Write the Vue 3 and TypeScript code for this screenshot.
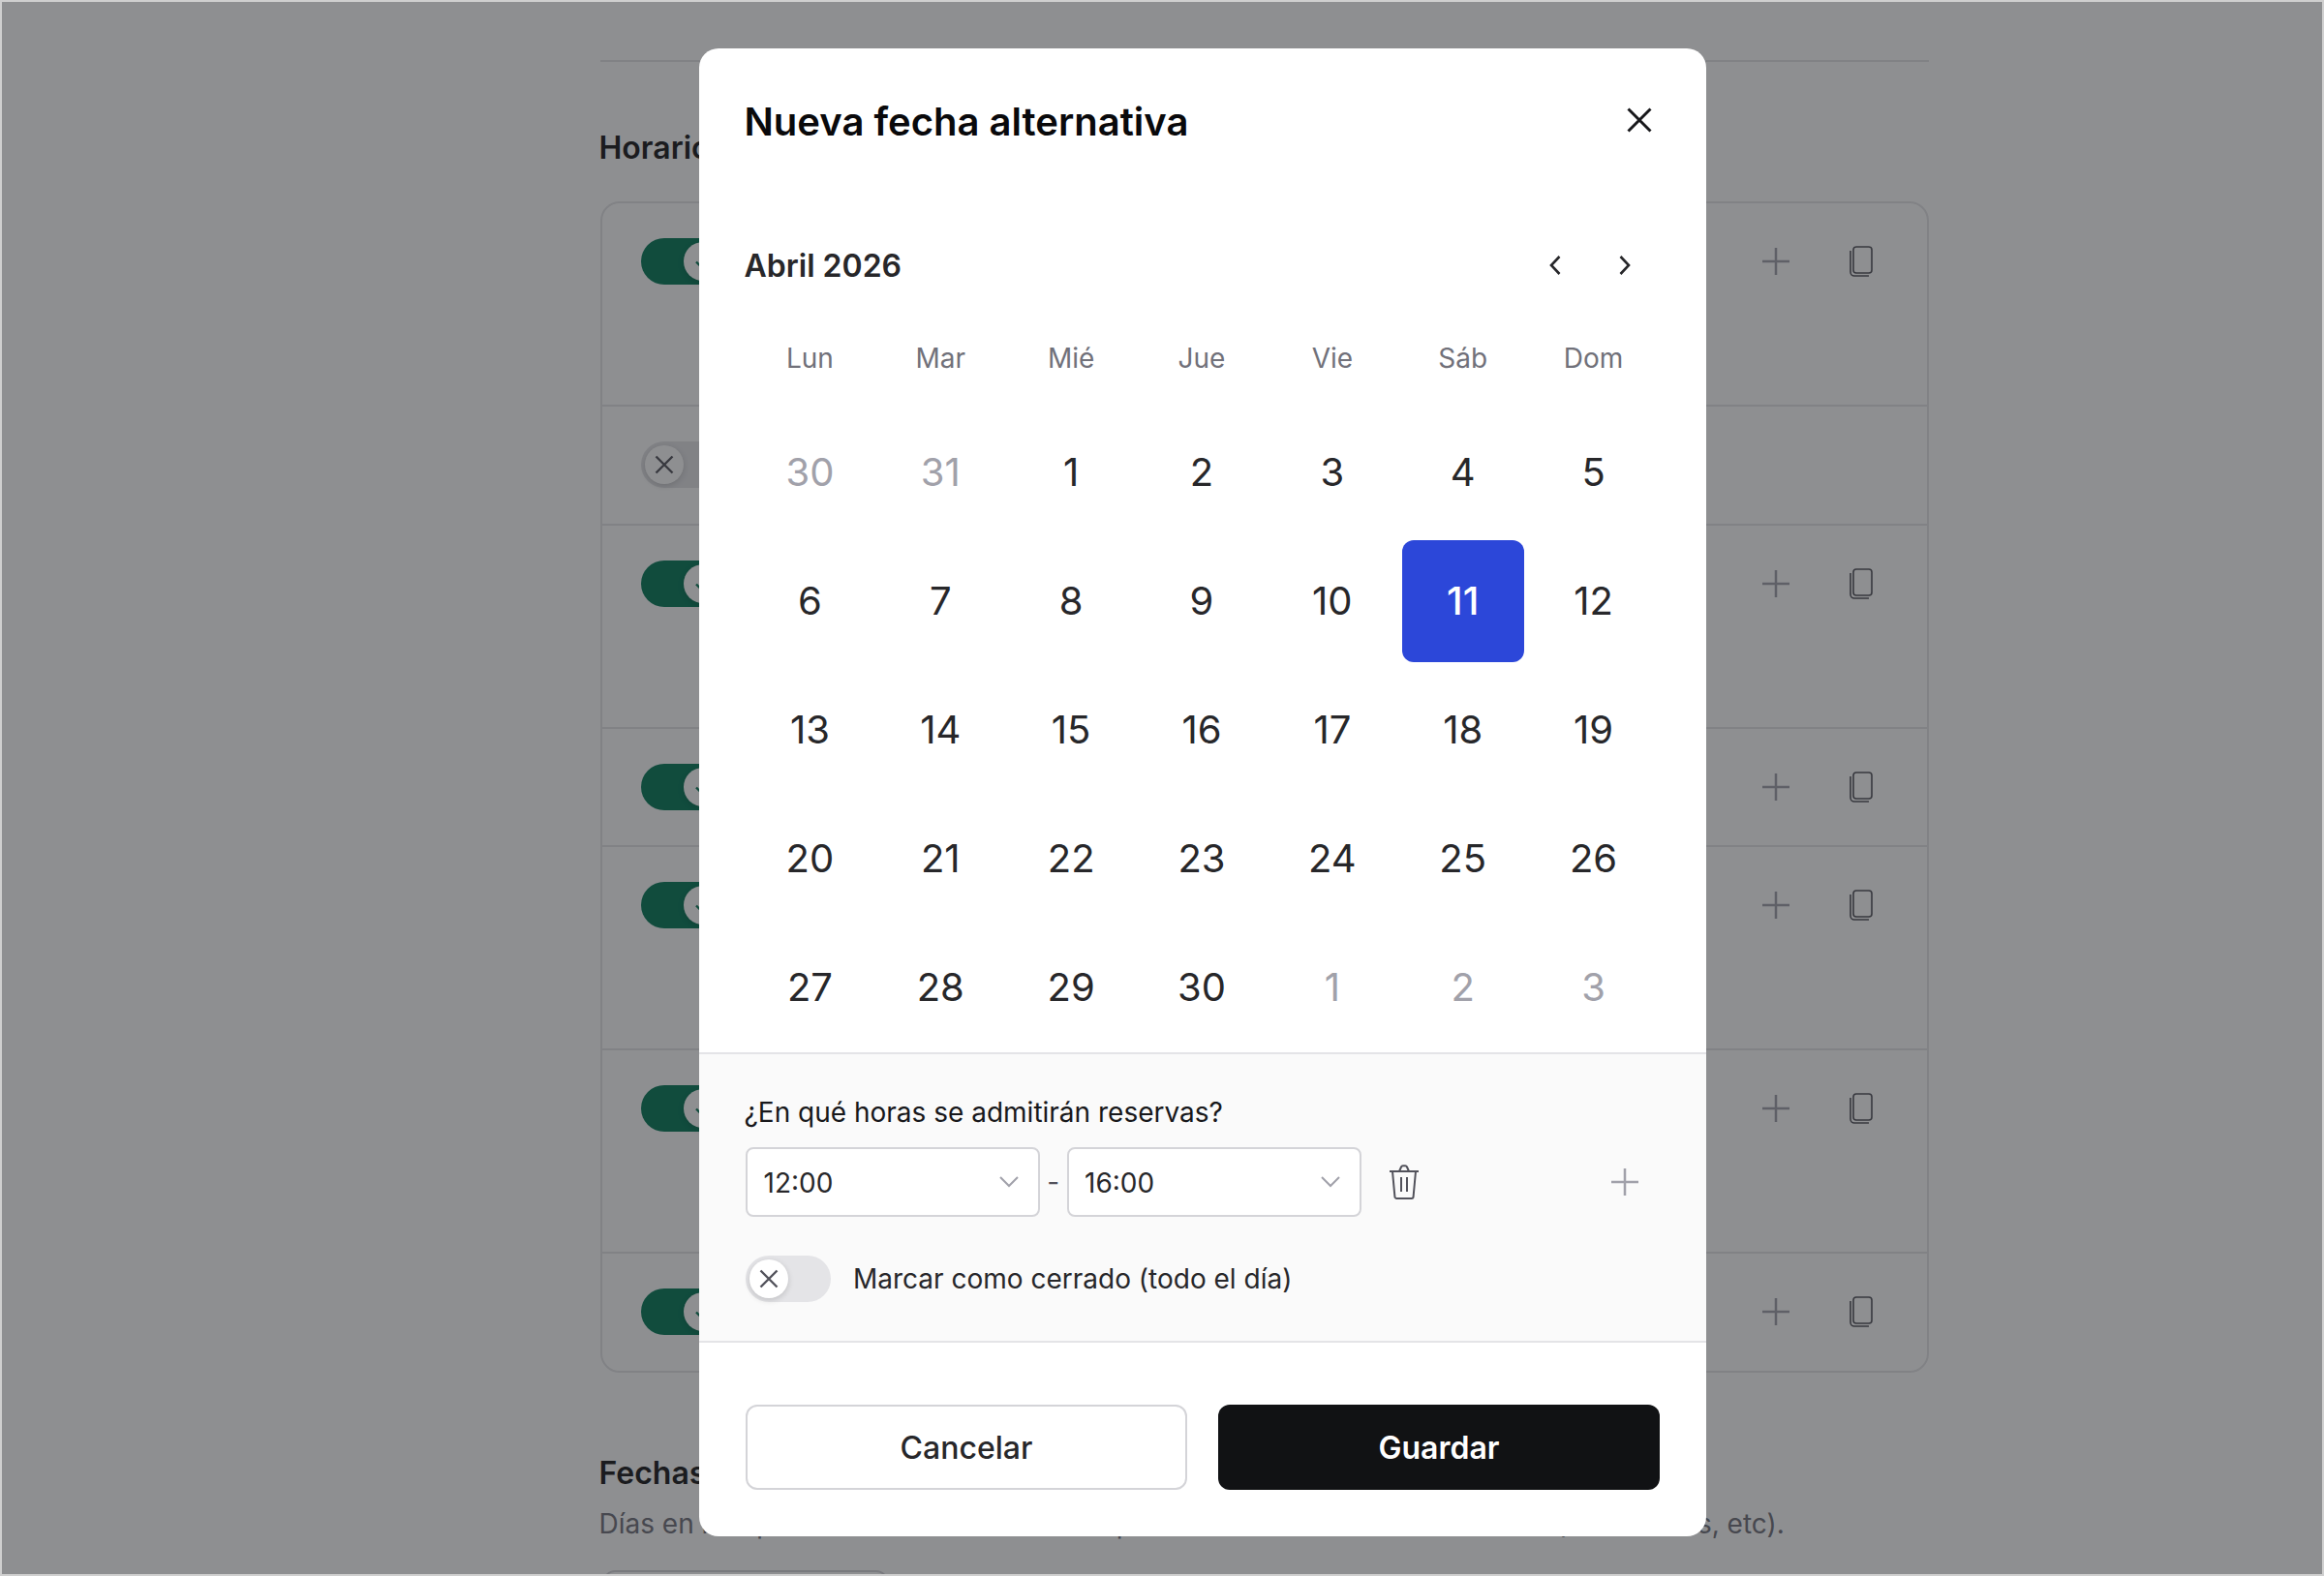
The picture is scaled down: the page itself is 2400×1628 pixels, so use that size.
<template>
  <div class="frame">
    <main class="page">
      <div class="top-rule" />
      <h2 class="section-title">Horarios habituales</h2>
      <section class="hours-card">
        <div v-for="(row, i) in rows" :key="i" :class="['hours-row', row.tall ? 'tall' : '']">
          <span :class="['toggle', row.open ? 'on' : 'off']">
            <span class="knob">
              <svg v-if="row.open" viewBox="0 0 24 24" class="knob-icon check"><path d="M5 12.5l5 5 9-11" /></svg>
              <svg v-else viewBox="0 0 24 24" class="knob-icon"><path d="M3.5 3.5l17 17M20.5 3.5l-17 17" /></svg>
            </span>
          </span>
          <template v-if="row.open">
            <svg viewBox="0 0 28 28" class="row-plus"><path d="M14 0v28M0 14h28" /></svg>
            <svg viewBox="0 0 24 32" class="row-copy">
              <rect x="4" y="1" width="19" height="27" rx="3" />
              <path d="M1 5v22a4 4 0 0 0 4 4h15" />
            </svg>
          </template>
        </div>
      </section>
      <h2 class="section-title second">Fechas alternativas</h2>
      <p class="section-sub">Días en los que el horario será diferente por cierres o eventos tan aislados (vacaciones, etc).</p>
      <div class="add-btn" />
    </main>

    <div class="overlay" />

    <div class="modal">
      <header class="modal-head">
        <h1>Nueva fecha alternativa</h1>
        <svg viewBox="0 0 26 26" class="close"><path d="M1.5 1.5l23 23M24.5 1.5l-23 23" /></svg>
      </header>

      <div class="month-bar">
        <span class="month">Abril 2026</span>
        <svg viewBox="0 0 12 20" class="chev left"><path d="M10.5 1L2 10l8.5 9" /></svg>
        <svg viewBox="0 0 12 20" class="chev right"><path d="M1.5 1L10 10l-8.5 9" /></svg>
      </div>

      <div class="week">
        <span v-for="d in weekdays" :key="d">{{ d }}</span>
      </div>
      <div class="days">
        <span
          v-for="(d, i) in days"
          :key="i"
          :class="['day', d.muted ? 'muted' : '', d.selected ? 'selected' : '']"
        >{{ d.n }}</span>
      </div>

      <section class="hours">
        <label class="hours-label">¿En qué horas se admitirán reservas?</label>
        <div class="range">
          <div class="select">
            <span>12:00</span>
            <svg viewBox="0 0 20 12" class="caret"><path d="M1 1l9 9 9-9" /></svg>
          </div>
          <span class="dash">-</span>
          <div class="select">
            <span>16:00</span>
            <svg viewBox="0 0 20 12" class="caret"><path d="M1 1l9 9 9-9" /></svg>
          </div>
          <svg viewBox="0 0 32 36" class="trash">
            <path d="M1 7h30M4 7l2.4 26a2 2 0 0 0 2 2h15.2a2 2 0 0 0 2-2L28 7M11 7l2-4.5a2 2 0 0 1 1.8-1.2h2.4a2 2 0 0 1 1.8 1.2L21 7M13 13v15M19 13v15" />
          </svg>
          <svg viewBox="0 0 28 28" class="range-plus"><path d="M14 0v28M0 14h28" /></svg>
        </div>
        <div class="closed-row">
          <span class="toggle off light">
            <span class="knob">
              <svg viewBox="0 0 24 24" class="knob-icon"><path d="M3.5 3.5l17 17M20.5 3.5l-17 17" /></svg>
            </span>
          </span>
          <span>Marcar como cerrado (todo el día)</span>
        </div>
      </section>

      <footer class="actions">
        <button class="btn ghost">Cancelar</button>
        <button class="btn solid">Guardar</button>
      </footer>
    </div>
  </div>
</template>

<script setup lang="ts">
interface Row {
  tall: boolean;
  open: boolean;
}

interface Day {
  n: number;
  muted?: boolean;
  selected?: boolean;
}

const rows: Row[] = [
  { tall: true, open: true },
  { tall: false, open: false },
  { tall: true, open: true },
  { tall: false, open: true },
  { tall: true, open: true },
  { tall: true, open: true },
  { tall: false, open: true },
];

const weekdays = ["Lun", "Mar", "Mié", "Jue", "Vie", "Sáb", "Dom"];

const days: Day[] = [
  { n: 30, muted: true },
  { n: 31, muted: true },
];
for (let n = 1; n <= 30; n++) {
  days.push({ n, selected: n === 11 });
}
for (let n = 1; n <= 3; n++) {
  days.push({ n, muted: true });
}
</script>

<style>
html,
body {
  margin: 0;
  background: #fff;
}
</style>

<style scoped>
.frame {
  position: relative;
  width: 2400px;
  height: 1628px;
  overflow: hidden;
  box-sizing: border-box;
  border: 2px solid #cfcfcf;
  font-family: Inter, "Liberation Sans", sans-serif;
  color: #18181b;
  background: #fff;
}

.page {
  box-sizing: border-box;
  width: 1372px;
  margin-left: 618px;
  padding-top: 60px;
}

.top-rule {
  height: 2px;
  background: #e4e4e7;
}

.section-title {
  margin: 69px 0 35px -1.5px;
  font-size: 32px;
  line-height: 40px;
  font-weight: 600;
}

.section-title.second {
  margin: 84px 0 0 -1.5px;
}

.section-sub {
  margin: 12px 0 0 -1.5px;
  font-size: 28px;
  line-height: 40px;
  color: #71717a;
  white-space: nowrap;
}

.add-btn {
  width: 290px;
  height: 60px;
  margin: 28px 0 0 3px;
  border: 2px solid #d4d4d8;
  border-radius: 12px;
}

.hours-card {
  border: 2px solid #e4e4e7;
  border-radius: 20px;
}

.hours-row {
  display: flex;
  align-items: flex-start;
  box-sizing: border-box;
  height: 122.5px;
  padding: 36px 40px;
  border-bottom: 2px solid #e4e4e7;
}

.hours-row.tall {
  height: 210px;
}

.hours-row:last-child {
  height: 121px;
  border-bottom: 0;
}

.row-plus {
  flex: none;
  width: 28px;
  height: 28px;
  margin: 10px 0 0 1070px;
  fill: none;
  stroke: #a1a1aa;
  stroke-width: 2.5;
}

.row-copy {
  flex: none;
  width: 24px;
  height: 32px;
  margin: 8px 0 0 62px;
  fill: none;
  stroke: #52525b;
  stroke-width: 1.6;
}

.toggle {
  display: flex;
  align-items: center;
  flex: none;
  box-sizing: border-box;
  width: 88px;
  height: 48px;
  padding: 4px;
  border-radius: 24px;
}

.toggle.on {
  justify-content: flex-end;
  background: #047857;
}

.toggle.off {
  background: #e4e4e7;
}

.knob {
  display: flex;
  align-items: center;
  justify-content: center;
  width: 40px;
  height: 40px;
  border-radius: 50%;
  background: #fff;
  box-shadow: 0 2px 6px rgba(0, 0, 0, 0.16);
}

.knob-icon {
  width: 24px;
  height: 24px;
  fill: none;
  stroke: #52525b;
  stroke-width: 2.4;
}

.knob-icon.check {
  stroke: #047857;
}

.overlay {
  position: absolute;
  inset: 0;
  background: rgba(29, 31, 35, 0.5);
}

.modal {
  position: absolute;
  left: 720px;
  top: 48px;
  display: flex;
  flex-direction: column;
  box-sizing: border-box;
  width: 1040px;
  height: 1537px;
  border-radius: 20px;
  background: #fff;
  overflow: hidden;
}

.modal-head {
  display: flex;
  align-items: center;
  justify-content: space-between;
  height: 48px;
  margin: 52px 56px 0 46.5px;
}

.modal-head h1 {
  margin: 0;
  font-size: 40px;
  line-height: 48px;
  font-weight: 600;
  color: #09090b;
}

.close {
  width: 26px;
  height: 26px;
  margin-bottom: 4px;
  fill: none;
  stroke: #18181b;
  stroke-width: 3;
}

.month-bar {
  display: flex;
  align-items: center;
  height: 40px;
  margin: 104px 0 0 46.5px;
}

.month {
  flex: 1;
  font-size: 32px;
  font-weight: 600;
  color: #27272a;
}

.chev {
  width: 12px;
  height: 20px;
  fill: none;
  stroke: #27272a;
  stroke-width: 2.6;
}

.chev.left {
  margin-right: 60px;
}

.chev.right {
  margin-right: 78px;
}

.week,
.days {
  display: grid;
  grid-template-columns: repeat(7, 134.86px);
  margin: 0 0 0 47px;
  justify-items: center;
  align-items: center;
}

.week {
  height: 40px;
  margin-top: 56px;
  font-size: 28px;
  color: #71717a;
}

.days {
  grid-auto-rows: 133px;
  margin-top: 31px;
}

.day {
  display: flex;
  align-items: center;
  justify-content: center;
  width: 126px;
  height: 126px;
  border-radius: 12px;
  font-size: 40px;
  color: #27272a;
}

.day.muted {
  color: #a1a1aa;
}

.day.selected {
  background: #2c47d9;
  color: #fff;
  font-weight: 500;
}

.hours {
  box-sizing: border-box;
  height: 300px;
  margin-top: auto;
  margin-bottom: 0;
  padding: 42px 48px 0;
  border-top: 2px solid #e4e4e7;
  border-bottom: 2px solid #e4e4e7;
  background: #fafafa;
}

.hours-label {
  display: block;
  margin-left: -1.5px;
  font-size: 28px;
  line-height: 36px;
  font-weight: 400;
  color: #18181b;
}

.range {
  display: flex;
  align-items: center;
  margin-top: 18px;
}

.select {
  display: flex;
  align-items: center;
  justify-content: space-between;
  box-sizing: border-box;
  width: 304px;
  height: 72px;
  padding: 2px 20px 0 16.5px;
  border: 2px solid #d4d4d8;
  border-radius: 8px;
  background: #fff;
  font-size: 28px;
  color: #27272a;
}

.caret {
  width: 20px;
  height: 12px;
  margin-top: -2px;
  fill: none;
  stroke: #a1a1aa;
  stroke-width: 2;
}

.dash {
  width: 27.5px;
  text-align: center;
  font-size: 28px;
  color: #52525b;
}

.trash {
  flex: none;
  width: 32px;
  height: 36px;
  margin-left: 28.5px;
  fill: none;
  stroke: #52525b;
  stroke-width: 2;
}

.range-plus {
  flex: none;
  width: 28px;
  height: 28px;
  margin-left: 198px;
  fill: none;
  stroke: #a1a1aa;
  stroke-width: 2.5;
}

.closed-row {
  display: flex;
  align-items: center;
  gap: 23px;
  margin-top: 40px;
  font-size: 28px;
  color: #27272a;
}

.actions {
  display: grid;
  grid-template-columns: 1fr 1fr;
  gap: 32px;
  padding: 64px 48px 48px;
}

.btn {
  height: 88px;
  border-radius: 12px;
  font-family: inherit;
  font-size: 32px;
  font-weight: 600;
}

.btn.ghost {
  border: 2px solid #d4d4d8;
  background: #fff;
  color: #27272a;
  font-weight: 500;
}

.btn.solid {
  border: 0;
  background: #111214;
  color: #fff;
}
</style>
